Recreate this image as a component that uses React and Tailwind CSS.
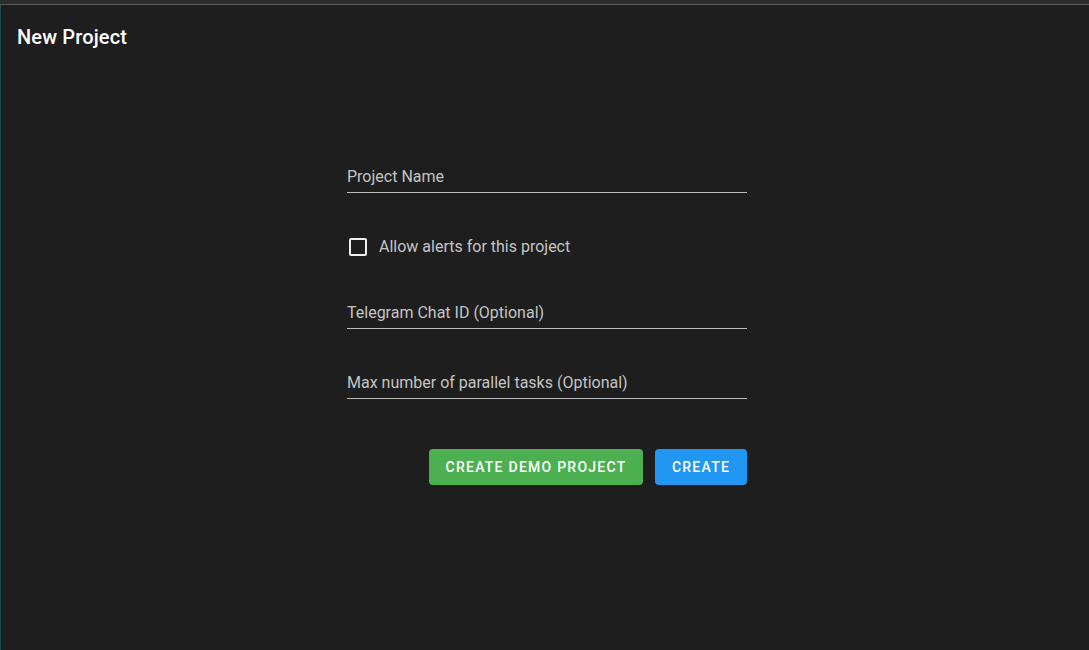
import React from "react";

function Field({ label }) {
  return (
    <div className="border-b border-[#bdbdbd] pb-[5px]">
      <div className="text-[16px] leading-[20px] text-[#c4c4c4]">{label}</div>
    </div>
  );
}

export default function App() {
  return (
    <div className="w-[1089px] h-[650px] bg-[#1e1e1e] overflow-hidden flex flex-col" style={{ fontFamily: "Roboto, 'Liberation Sans', sans-serif" }}>
      {/* top strip */}
      <div className="h-[4px] bg-[#2c2c2c]" />
      <div className="h-[1px] bg-[#5c5c5c]" />

      <div className="flex flex-1 min-h-0">
        <div className="w-[1px] bg-[#1c4a55]" />
        <div className="flex-1 flex flex-col">
          {/* header */}
          <div className="h-[64px] flex items-center pl-[16px]">
            <h1 className="text-[20px] font-medium text-white tracking-[0.15px]">New Project</h1>
          </div>

          {/* form */}
          <div className="flex justify-center">
            <div className="w-[400px] mt-[98px] ml-[4px]">
              <Field label="Project Name" />

              <label className="flex items-center gap-[12px] mt-[42px] pl-[2px]">
                <span className="w-[18px] h-[18px] border-2 border-[#f0f0f0] rounded-[2px]" />
                <span className="text-[16px] text-[#c4c4c4]">Allow alerts for this project</span>
              </label>

              <div className="mt-[44px]">
                <Field label="Telegram Chat ID (Optional)" />
              </div>
              <div className="mt-[44px]">
                <Field label="Max number of parallel tasks (Optional)" />
              </div>

              <div className="flex justify-end gap-[12px] mt-[50px]">
                <button className="h-[36px] w-[214px] rounded-[4px] bg-[#4caf50] text-white text-[14px] font-medium tracking-[1.25px] uppercase">
                  Create Demo Project
                </button>
                <button className="h-[36px] w-[92px] rounded-[4px] bg-[#2196f3] text-white text-[14px] font-medium tracking-[1.25px] uppercase">
                  Create
                </button>
              </div>
            </div>
          </div>
        </div>
      </div>
    </div>
  );
}
